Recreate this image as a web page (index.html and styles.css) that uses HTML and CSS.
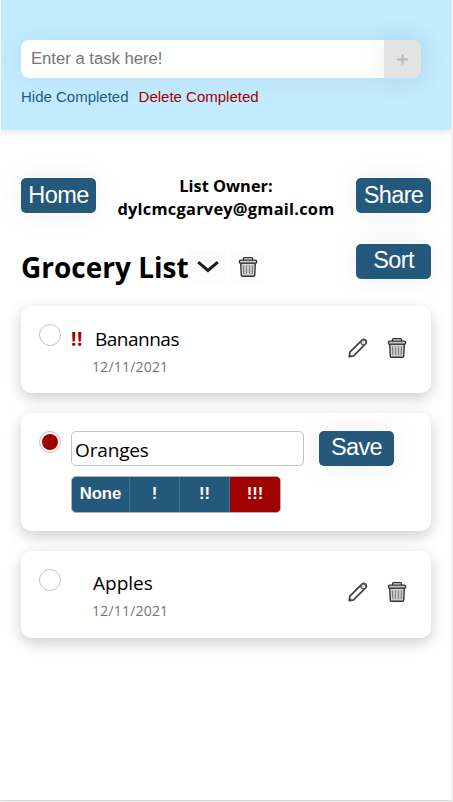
FILE: index.html
```
<!DOCTYPE html>
<html lang="en">
<head>
<meta charset="utf-8">
<title>Grocery List</title>
<link rel="stylesheet" href="styles.css">
</head>
<body>
<svg width="0" height="0" class="defs" aria-hidden="true">
  <symbol id="trash" viewBox="0 0 20 20">
    <path d="M5.500 3.200V1.600q0-.9.900-.9h7.200q.9 0 .9.900v1.600" fill="#ddd" stroke="#333" stroke-width="1.300"/>
    <path d="M2.700 6h14.600l-.6 12.300q-.1 1-1 1H4.300q-.9 0-1-1z" fill="#d4d4d4" stroke="#333" stroke-width="1.400"/>
    <rect x="1.400" y="3.200" width="17.200" height="3" rx="1" fill="#c4c8c6" stroke="#333" stroke-width="1.300"/>
    <path d="M5.500 8.200l.3 9M8.500 8.200v9M11.500 8.200v9M14.500 8.200l-.3 9" fill="none" stroke="#858585" stroke-width="1.300"/>
  </symbol>
  <symbol id="pencil" viewBox="0 0 20 20">
    <path d="M1.300 18.700l.6-4.500L14 2.200q1.700-1.700 3.500 0t0 3.700L5.600 17.800z" fill="#fff" stroke="#444" stroke-width="1.800" stroke-linejoin="round"/>
    <circle cx="15.500" cy="4.300" r="2.500" fill="#ddd" stroke="#555" stroke-width="1.300"/>
    <path d="M1.200 18.800l.5-2 1.500 1.500z" fill="#444" stroke="#444" stroke-width=".7"/>
  </symbol>
</svg>
<div class="app">
  <header class="top">
    <form class="entry">
      <input class="task-input" type="text" placeholder="Enter a task here!">
      <button class="add" type="button" aria-label="Add"><svg width="11" height="11" viewBox="0 0 11 11"><path d="M0 5.500h11M5.500 0.500v10" stroke="#b7b7b7" stroke-width="2"/></svg></button>
    </form>
    <nav class="links"><span class="hide">Hide Completed</span><span class="delete">Delete Completed</span></nav>
  </header>
  <main>
    <div class="owner-row">
      <button class="btn">Home</button>
      <div class="owner"><div class="label">List Owner:</div><div class="mail">dylcmcgarvey@gmail.com</div></div>
      <button class="btn">Share</button>
    </div>
    <div class="title-row">
      <h1>Grocery List</h1>
      <button class="icon-btn chevron"><svg width="22" height="14" viewBox="0 0 22 14"><path d="M1.200 2.200L11 10.500 20.800 2.200" fill="none" stroke="#1c1c1c" stroke-width="3"/></svg></button>
      <button class="icon-btn"><svg width="20" height="20"><use href="#trash"/></svg></button>
      <button class="btn sort">Sort</button>
    </div>
    <section class="card">
      <span class="check"></span>
      <div class="text first">
        <div class="name"><b class="prio">!!</b><span class="banannas">Banannas</span></div>
        <div class="date">12/11/2021</div>
      </div>
      <div class="tools"><svg width="20" height="20"><use href="#pencil"/></svg><svg width="20" height="20"><use href="#trash"/></svg></div>
    </section>
    <section class="card editing">
      <span class="check on"></span>
      <div class="editor">
        <div class="edit-row"><input class="name-input" type="text" value="Oranges"><button class="btn save">Save</button></div>
        <div class="levels"><span>None</span><span>!</span><span>!!</span><span class="chosen">!!!</span></div>
      </div>
    </section>
    <section class="card last">
      <span class="check"></span>
      <div class="text">
        <div class="name"><span class="apples">Apples</span></div>
        <div class="date">12/11/2021</div>
      </div>
      <div class="tools"><svg width="20" height="20"><use href="#pencil"/></svg><svg width="20" height="20"><use href="#trash"/></svg></div>
    </section>
  </main>
</div>
</body>
</html>
```
FILE: styles.css
```
* { box-sizing: border-box; }
body { margin: 0; background: #f0f0f0; font-family: "Open Sans", sans-serif; color: #000; }
.defs { display: block; }
button { padding: 0; border: 0; font-family: "Liberation Sans", sans-serif; }
svg { display: block; flex: none; }
.app { width: 451px; height: 801px; background: #fff; border-left: 1px solid #fff; border-bottom: 1px solid #d8d8d8; overflow: hidden; }
.top { height: 130px; padding: 40px 30px 0 20px; background: #c3ebff; box-shadow: 0 2px 8px rgba(0,0,0,.1); overflow: hidden; }
.entry { display: flex; width: 400px; height: 38px; border-radius: 8px; box-shadow: 0 0 30px rgba(0,0,0,.06); }
.task-input { width: 363px; border: 0; border-radius: 8px 0 0 8px; padding: 0 10px; background: #fff; font: 16.67px "Liberation Sans", sans-serif; }
.task-input::placeholder { color: #757575; opacity: 1; }
.add { width: 37px; display: flex; align-items: center; justify-content: center; border-radius: 0 8px 8px 0; background: #e3e3e3; box-shadow: 0 0 30px rgba(0,0,0,.07); }
.links { display: flex; gap: 10px; margin-top: 10px; font: 15px/18px "Liberation Sans", sans-serif; }
.hide { color: #24597b; }
.delete { color: #9f0000; }
main { padding: 48px 20px 0; }
.btn { width: 75px; height: 35px; flex: none; padding-bottom: 1px; border-radius: 5px; background: #24597b; color: #fff; font-size: 23.5px; line-height: 32px; letter-spacing: -.6px; box-shadow: 0 0 30px rgba(0,0,0,.07); }
.owner-row { display: flex; justify-content: space-between; }
.owner { margin-top: -4px; text-align: center; font-weight: 700; font-size: 16.4px; line-height: 23px; white-space: nowrap; }
.mail { letter-spacing: .24px; }
.title-row { display: flex; height: 51px; margin-top: 16px; padding-top: 11px; align-items: center; }
h1 { width: 168px; margin: -1px 0 0; font-size: 28px; line-height: 40px; white-space: nowrap; }
.icon-btn { display: flex; width: 37px; height: 35px; align-items: center; justify-content: center; border-radius: 5px; background: #fcfcfc; }
.icon-btn + .icon-btn { width: 33px; margin-left: 5px; }
.sort { align-self: flex-start; margin: -3px 0 0 auto; padding-bottom: 3px; }
.save { padding-bottom: 3px; }
.card { display: flex; height: 87px; margin-top: 19px; padding: 18px; border-radius: 10px; background: #fff; box-shadow: 0 5px 15px rgba(0,0,0,.2); }
.card.editing { height: 118px; margin-top: 20px; }
.card.last { margin-top: 20px; }
.check { width: 22px; height: 22px; flex: none; border: 1px solid #c4c4c4; border-radius: 50%; background: #fff; }
.check.on { padding: 2px; background: #9f0000 content-box; }
.text { width: 258px; margin-left: 10px; }
.name { display: flex; height: 30px; font-size: 19px; line-height: 30px; }
.prio { width: 24px; letter-spacing: .6px; color: #9f0000; }
.banannas { letter-spacing: -.5px; }
.date { margin-left: 21px; color: #757575; font-size: 14px; line-height: 25px; letter-spacing: .2px; }
.apples { margin-left: 22px; }
.last .text { margin-top: -1px; }
.tools { display: flex; gap: 19px; margin: 13.500px 0 0 19px; }
.last .tools { margin-top: 13px; }
.editor { margin-left: 10px; }
.edit-row { display: flex; gap: 15px; }
.name-input { width: 233px; height: 35px; padding: 3px 3px 0; border: 1px solid #c4c4c4; border-radius: 5px; font: 19px "Open Sans", sans-serif; letter-spacing: -.15px; }
.levels { display: flex; width: 210px; height: 37px; margin-top: 10px; border: 1px solid #b0b0b0; border-radius: 5px; overflow: hidden; background: #24597b; color: #fff; font: bold 16.67px/33px "Liberation Sans", sans-serif; text-align: center; }
.levels span { width: 50px; border-left: 1px solid #47718e; }
.levels span:first-child { width: 57px; border: 0; }
.levels .chosen { background: #9f0000; flex: 1; }
```
